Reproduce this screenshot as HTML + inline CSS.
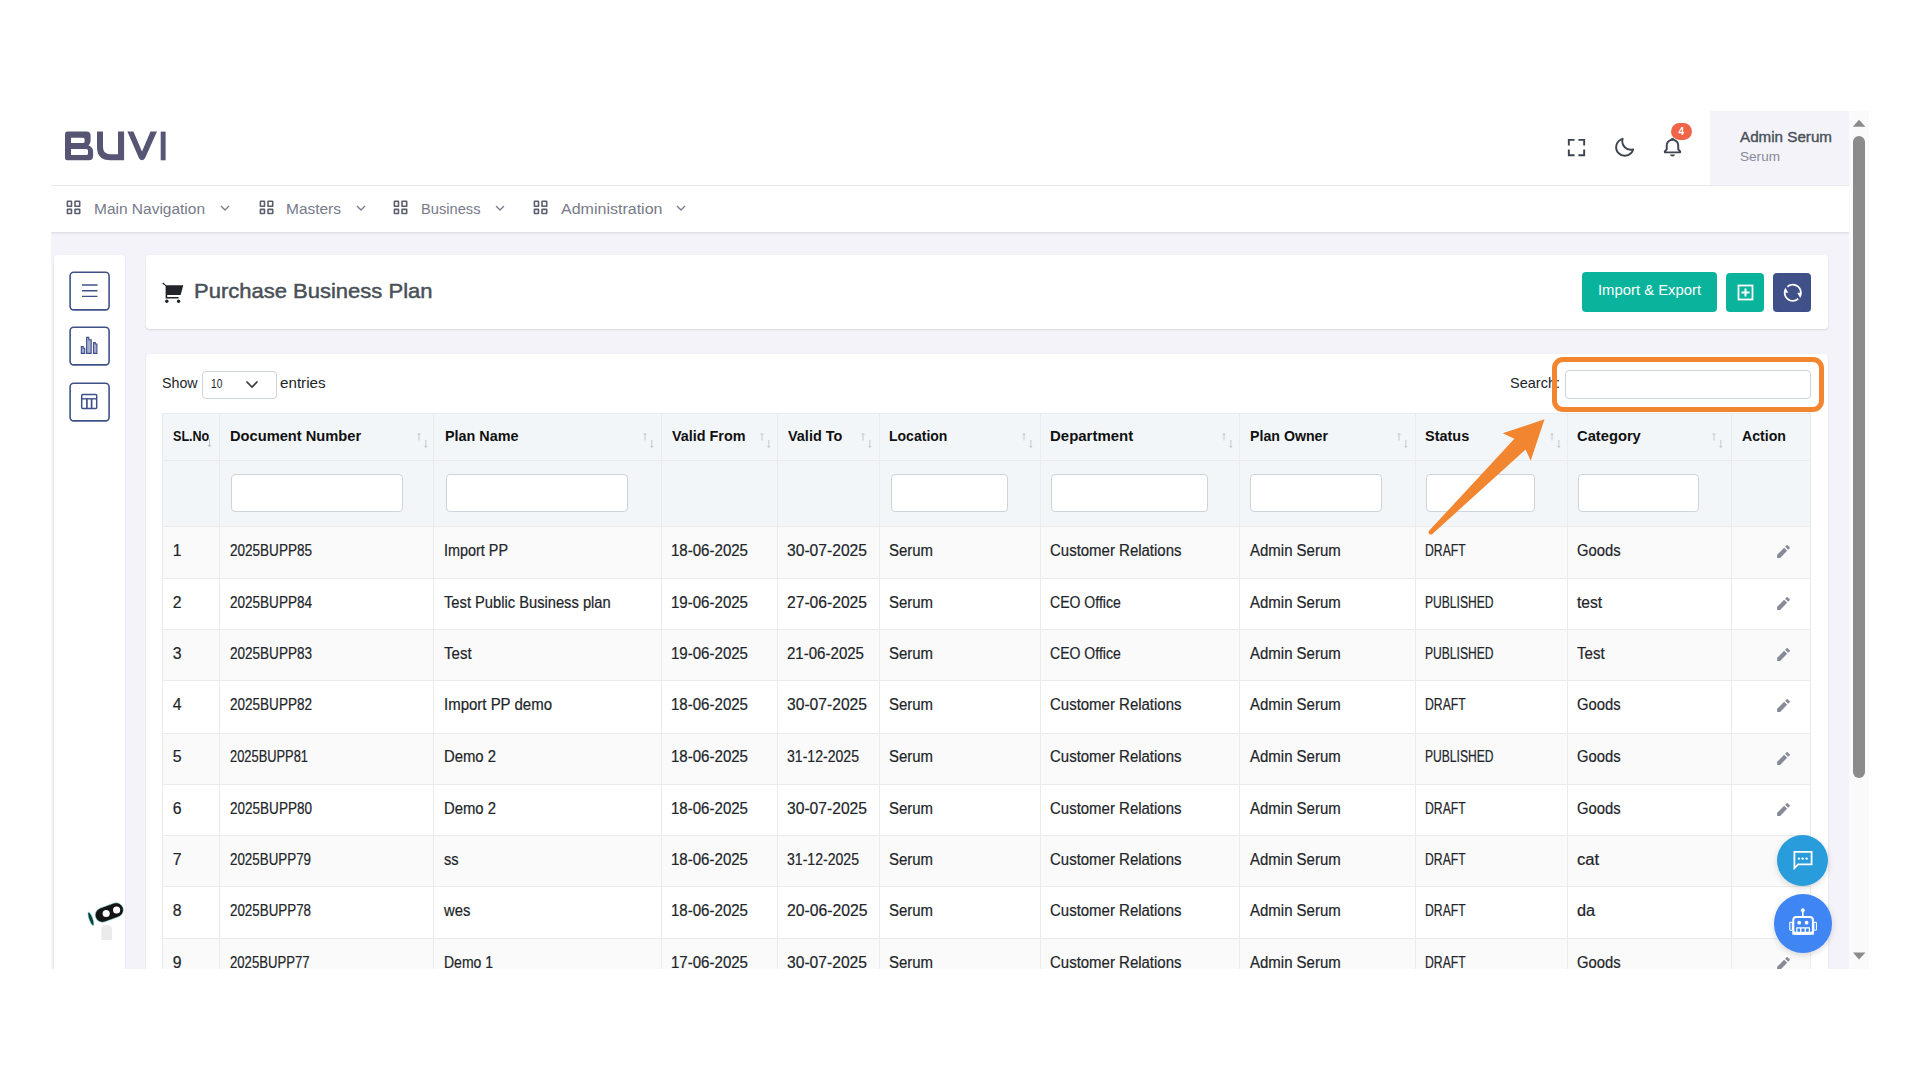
<!DOCTYPE html>
<html><head><meta charset="utf-8"><style>
html,body{margin:0;padding:0;}
body{width:1920px;height:1080px;overflow:hidden;position:relative;background:#fff;font-family:"Liberation Sans", sans-serif;}
.b{position:absolute;}
.t{position:absolute;white-space:nowrap;line-height:1;}
</style></head><body>
<div class="b" style="left:51px;top:111px;width:1798px;height:858px;background:#f3f3f9;"></div>
<div class="b" style="left:51px;top:111px;width:1798px;height:74px;background:#fff;border-bottom:1px solid #e9ebec;"></div>
<div class="b" style="left:1710px;top:111px;width:139px;height:74px;background:#f3f3f9;"></div>
<div class="b" style="left:51px;top:186px;width:1798px;height:46px;background:#fff;box-shadow:0 1px 2px rgba(56,65,74,0.15);"></div>
<svg class="b" style="left:0px;top:0px;" width="200" height="200" viewBox="0 0 200 200"><g fill="#565573" fill-rule="evenodd"><path d="M65 134 Q65 131.6 67.4 131.6 H86.5 Q90.6 131.6 90.6 135.7 V140.5 Q90.6 143.6 88.6 145.6 Q93.1 147.4 93.1 151.5 V156 Q93.1 160.3 88.8 160.3 H67.4 Q65 160.3 65 158 Z M71 137.8 H83 Q84.6 137.8 84.6 139.4 V141.5 Q84.6 143 83 143 H71 Z M71 149 H86.4 Q88 149 88 150.6 V153.4 Q88 155 86.4 155 H71 Z"/><path d="M97 131.6 H103 V147 Q103 154.3 110.3 154.3 H118 V131.6 H124.1 V160.3 H110.3 Q97 160.3 97 147 Z"/><path d="M127.4 131.6 H133.4 L142 151.5 L150.5 131.6 H157 L145 158.3 Q142 162 139 158.3 Z"/><rect x="160.7" y="131.6" width="4.9" height="28.7"/></g></svg>
<svg class="b" style="left:1565.1px;top:135.5px;" width="23" height="23" viewBox="0 0 24 24"><path fill="#3d4450" d="M5 5h5V3H3v7h2zm5 14H5v-5H3v7h7zm11-5h-2v5h-5v2h7zm-2-4h2V3h-7v2h5z"/></svg>
<svg class="b" style="left:1612.8px;top:135.6px;" width="23" height="23" viewBox="0 0 24 24"><path fill="#3d4450" d="M20.742 13.045a8.088 8.088 0 0 1-2.077.271c-2.135 0-4.14-.83-5.646-2.336a8.025 8.025 0 0 1-2.064-7.723A1 1 0 0 0 9.73 2.034a10.014 10.014 0 0 0-4.489 2.582c-3.898 3.898-3.898 10.243 0 14.143a9.937 9.937 0 0 0 7.072 2.93 9.93 9.93 0 0 0 7.07-2.929 10.007 10.007 0 0 0 2.583-4.491 1.001 1.001 0 0 0-1.224-1.224zm-2.772 4.301a7.947 7.947 0 0 1-5.656 2.343 7.953 7.953 0 0 1-5.658-2.344c-3.118-3.119-3.118-8.195 0-11.314a7.923 7.923 0 0 1 2.06-1.483 10.027 10.027 0 0 0 2.89 7.848 9.972 9.972 0 0 0 7.848 2.891 8.036 8.036 0 0 1-1.484 2.059z"/></svg>
<svg class="b" style="left:1660.5px;top:136.2px;" width="23" height="23" viewBox="0 0 24 24"><path fill="#3d4450" d="M19 13.586V10c0-3.217-2.185-5.927-5.145-6.742C13.562 2.52 12.846 2 12 2s-1.562.52-1.855 1.258C7.185 4.074 5 6.783 5 10v3.586l-1.707 1.707A.996.996 0 0 0 3 16v1a1 1 0 0 0 1 1h16a1 1 0 0 0 1-1v-1a.996.996 0 0 0-.293-.707L19 13.586zM19 16.3H5v.114l1.707-1.707A.996.996 0 0 0 7 14v-4c0-2.757 2.243-5 5-5s5 2.243 5 5v4c0 .266.105.52.293.707L19 16.414V17zm-7 5a2.98 2.98 0 0 0 2.818-2H9.182A2.98 2.98 0 0 0 12 21.3z"/></svg>
<div class="b" style="left:1671px;top:123px;width:21px;height:17px;background:#f06548;border-radius:9px;"></div>
<div class="t" style="left:1678.5px;top:126.84px;font-size:10px;font-weight:700;color:#fff;">4</div>
<div class="t" style="left:1740px;top:129.85px;font-size:14px;font-weight:400;color:#495057;transform:scaleX(1.0847);transform-origin:0 0;-webkit-text-stroke:0.35px #495057;">Admin Serum</div>
<div class="t" style="left:1740px;top:151.42px;font-size:12.5px;font-weight:400;color:#878a99;transform:scaleX(1.0861);transform-origin:0 0;">Serum</div>
<svg class="b" style="left:66px;top:199.5px;" width="15" height="15" viewBox="0 0 15 15"><rect x="1.4" y="1.3" width="4.1" height="5" rx="0.4" fill="none" stroke="#5b5e6e" stroke-width="1.6"/><rect x="9" y="1.3" width="4.7" height="5" rx="0.4" fill="none" stroke="#5b5e6e" stroke-width="1.6"/><rect x="1.4" y="9.4" width="4.1" height="4.1" rx="0.4" fill="none" stroke="#5b5e6e" stroke-width="1.6"/><rect x="9" y="9.4" width="4.7" height="4.1" rx="0.4" fill="none" stroke="#5b5e6e" stroke-width="1.6"/></svg>
<div class="t" style="left:94px;top:201.25px;font-size:15.3px;font-weight:400;color:#777a89;transform:scaleX(1.0120);transform-origin:0 0;">Main Navigation</div>
<svg class="b" style="left:219.5px;top:204.5px;" width="10" height="7" viewBox="0 0 10 7"><path d="M1 1 L5 5 L9 1" fill="none" stroke="#7b7f8f" stroke-width="1.4"/></svg>
<svg class="b" style="left:258.5px;top:199.5px;" width="15" height="15" viewBox="0 0 15 15"><rect x="1.4" y="1.3" width="4.1" height="5" rx="0.4" fill="none" stroke="#5b5e6e" stroke-width="1.6"/><rect x="9" y="1.3" width="4.7" height="5" rx="0.4" fill="none" stroke="#5b5e6e" stroke-width="1.6"/><rect x="1.4" y="9.4" width="4.1" height="4.1" rx="0.4" fill="none" stroke="#5b5e6e" stroke-width="1.6"/><rect x="9" y="9.4" width="4.7" height="4.1" rx="0.4" fill="none" stroke="#5b5e6e" stroke-width="1.6"/></svg>
<div class="t" style="left:286px;top:201.25px;font-size:15.3px;font-weight:400;color:#777a89;transform:scaleX(1.0109);transform-origin:0 0;">Masters</div>
<svg class="b" style="left:355.5px;top:204.5px;" width="10" height="7" viewBox="0 0 10 7"><path d="M1 1 L5 5 L9 1" fill="none" stroke="#7b7f8f" stroke-width="1.4"/></svg>
<svg class="b" style="left:393px;top:199.5px;" width="15" height="15" viewBox="0 0 15 15"><rect x="1.4" y="1.3" width="4.1" height="5" rx="0.4" fill="none" stroke="#5b5e6e" stroke-width="1.6"/><rect x="9" y="1.3" width="4.7" height="5" rx="0.4" fill="none" stroke="#5b5e6e" stroke-width="1.6"/><rect x="1.4" y="9.4" width="4.1" height="4.1" rx="0.4" fill="none" stroke="#5b5e6e" stroke-width="1.6"/><rect x="9" y="9.4" width="4.7" height="4.1" rx="0.4" fill="none" stroke="#5b5e6e" stroke-width="1.6"/></svg>
<div class="t" style="left:421px;top:201.25px;font-size:15.3px;font-weight:400;color:#777a89;transform:scaleX(0.9585);transform-origin:0 0;">Business</div>
<svg class="b" style="left:494.5px;top:204.5px;" width="10" height="7" viewBox="0 0 10 7"><path d="M1 1 L5 5 L9 1" fill="none" stroke="#7b7f8f" stroke-width="1.4"/></svg>
<svg class="b" style="left:532.5px;top:199.5px;" width="15" height="15" viewBox="0 0 15 15"><rect x="1.4" y="1.3" width="4.1" height="5" rx="0.4" fill="none" stroke="#5b5e6e" stroke-width="1.6"/><rect x="9" y="1.3" width="4.7" height="5" rx="0.4" fill="none" stroke="#5b5e6e" stroke-width="1.6"/><rect x="1.4" y="9.4" width="4.1" height="4.1" rx="0.4" fill="none" stroke="#5b5e6e" stroke-width="1.6"/><rect x="9" y="9.4" width="4.7" height="4.1" rx="0.4" fill="none" stroke="#5b5e6e" stroke-width="1.6"/></svg>
<div class="t" style="left:561px;top:201.25px;font-size:15.3px;font-weight:400;color:#777a89;transform:scaleX(1.0472);transform-origin:0 0;">Administration</div>
<svg class="b" style="left:675.5px;top:204.5px;" width="10" height="7" viewBox="0 0 10 7"><path d="M1 1 L5 5 L9 1" fill="none" stroke="#7b7f8f" stroke-width="1.4"/></svg>
<div class="b" style="left:54px;top:255px;width:71px;height:800px;background:#fff;border-radius:4px;box-shadow:0 1px 2px rgba(56,65,74,0.15);"></div>
<svg class="b" style="left:68px;top:270.5px;" width="43.5" height="42" viewBox="0 0 43.5 42"><rect x="2.1" y="1.3" width="39" height="37.6" rx="3.6" fill="none" stroke="#405189" stroke-width="1.6"/></svg>
<svg class="b" style="left:68px;top:326.0px;" width="43.5" height="42" viewBox="0 0 43.5 42"><rect x="2.1" y="1.3" width="39" height="37.6" rx="3.6" fill="none" stroke="#405189" stroke-width="1.6"/></svg>
<svg class="b" style="left:68px;top:381.5px;" width="43.5" height="42" viewBox="0 0 43.5 42"><rect x="2.1" y="1.3" width="39" height="37.6" rx="3.6" fill="none" stroke="#405189" stroke-width="1.6"/></svg>
<svg class="b" style="left:80px;top:282px;" width="20" height="16" viewBox="0 0 20 16"><path d="M2 3H17.5M2 8.7H17.5M2 14.4H17.5" stroke="#405189" stroke-width="1.4"/></svg>
<svg class="b" style="left:76px;top:330px;" width="26" height="84" viewBox="0 0 26 84"><g fill="#a3abd0" stroke="#405189" stroke-width="1.1"><path d="M5.3 23.4 V16.5 H7.2 V18.3 H8.7 V23.4 Z"/><path d="M10.6 23.4 V7.4 H12.8 V9.7 H15.2 V23.4 Z"/><path d="M17.5 23.4 V12.5 H19.3 V14 H20.9 V23.4 Z"/></g><rect x="5.7" y="64.5" width="15" height="14" rx="1" fill="none" stroke="#405189" stroke-width="1.5"/><path d="M5.7 68.8 H20.7" stroke="#405189" stroke-width="1.4"/><path d="M10.9 68.8 V78.5 M15.6 68.8 V78.5" stroke="#405189" stroke-width="1.7"/></svg>
<svg class="b" style="left:80px;top:895px;" width="50" height="50" viewBox="0 0 50 50"><g transform="rotate(-20 109 912.5)" transform-origin="0 0"></g><rect x="94.8" y="905.25" width="29" height="14.5" rx="7.25" transform="translate(-80 -895) rotate(-20 109.3 912.5)" fill="#151515" stroke="#7ad9d3" stroke-width="0.7" stroke-opacity="0.7"/><g transform="translate(-80 -895)"><circle cx="106.2" cy="913.5" r="3.6" fill="#fff"/><circle cx="116.6" cy="910" r="3.6" fill="#fff"/><ellipse cx="90.9" cy="918.8" rx="1.8" ry="7" transform="rotate(-20 90.9 918.8)" fill="#0d3b3b" stroke="#7ad9d3" stroke-width="0.8" stroke-opacity="0.7"/><path d="M101.3 940 V929 Q101.3 925 106.6 925 Q112 925 112 929 V940 Z" fill="#ebebeb"/></g></svg>
<div class="b" style="left:146px;top:255px;width:1682px;height:74px;background:#fff;border-radius:4px;box-shadow:0 1px 2px rgba(56,65,74,0.15);"></div>
<svg class="b" style="left:155px;top:270px;" width="40" height="40" viewBox="0 0 40 40"><g transform="translate(-155 -270)" fill="#212529"><path d="M162.2 283.4 L163.1 282.5 L166.3 285.2 L183.2 285.2 L181.9 290.5 L180.6 295 L167.2 295 L167.2 297 L178.6 297 L178.6 298.6 L165.6 298.6 L165.6 286 Z"/><circle cx="166.8" cy="301.2" r="1.7"/><circle cx="178.6" cy="301.2" r="1.7"/></g></svg>
<div class="t" style="left:193.8px;top:282.24px;font-size:19.8px;font-weight:400;color:#495057;transform:scaleX(1.1123);transform-origin:0 0;-webkit-text-stroke:0.45px #495057;">Purchase Business Plan</div>
<div class="b" style="left:1582px;top:272px;width:135px;height:39.5px;background:#0ab39c;border-radius:4px;"></div>
<div class="t" style="left:1598px;top:282.97px;font-size:14.8px;font-weight:400;color:#fff;transform:scaleX(1.0020);transform-origin:0 0;">Import &amp; Export</div>
<div class="b" style="left:1726px;top:273px;width:38px;height:38.5px;background:#0ab39c;border-radius:4px;"></div>
<svg class="b" style="left:1737px;top:284px;" width="17" height="17" viewBox="0 0 17 17"><rect x="1.5" y="1.5" width="14" height="14" fill="none" stroke="#fff" stroke-width="1.8"/><path d="M8.5 4.5V12.5M4.5 8.5H12.5" stroke="#fff" stroke-width="2"/></svg>
<div class="b" style="left:1773px;top:273px;width:38px;height:38.5px;background:#405189;border-radius:4px;"></div>
<svg class="b" style="left:1781.6px;top:282px;" width="21.6" height="21.6" viewBox="0 0 24 24"><path fill="#fff" d="M5.463 4.433A9.961 9.961 0 0 1 12 2c5.523 0 10 4.477 10 10 0 2.136-.67 4.116-1.81 5.74L17 12h3A8 8 0 0 0 6.46 6.228l-.997-1.795zm13.074 15.134A9.961 9.961 0 0 1 12 22C6.477 22 2 17.523 2 12c0-2.136.67-4.116 1.81-5.74L7 12H4a8 8 0 0 0 13.54 5.772l.997 1.795z"/></svg>
<div class="b" style="left:146px;top:354px;width:1682px;height:700px;background:#fff;border-radius:4px;box-shadow:0 1px 2px rgba(56,65,74,0.15);"></div>
<div class="t" style="left:162px;top:376.03px;font-size:14.5px;font-weight:400;color:#212529;transform:scaleX(0.9812);transform-origin:0 0;">Show</div>
<div class="b" style="left:201.5px;top:370.5px;width:75px;height:28.5px;border:1px solid #ced4da;border-radius:4px;box-sizing:border-box;background:#fff;"></div>
<div class="t" style="left:210.8px;top:377.20px;font-size:13px;font-weight:400;color:#212529;transform:scaleX(0.7810);transform-origin:0 0;">10</div>
<svg class="b" style="left:245px;top:380px;" width="14" height="9" viewBox="0 0 14 9"><path d="M1.5 1.5 L7 7 L12.5 1.5" fill="none" stroke="#343a40" stroke-width="1.6"/></svg>
<div class="t" style="left:280px;top:375.93px;font-size:14.5px;font-weight:400;color:#212529;transform:scaleX(1.0475);transform-origin:0 0;">entries</div>
<div class="t" style="left:1509.5px;top:376.13px;font-size:14.5px;font-weight:400;color:#212529;transform:scaleX(1.0003);transform-origin:0 0;">Search:</div>
<div class="b" style="left:1565px;top:370.3px;width:246.3px;height:28.5px;border:1px solid #ced4da;border-radius:4px;box-sizing:border-box;background:#fff;"></div>
<div class="b" style="left:162px;top:413px;width:1648px;height:113px;background:#f3f6f9;"></div>
<div class="b" style="left:162px;top:526px;width:1648px;height:52px;background:#fafafa;"></div>
<div class="b" style="left:162px;top:629px;width:1648px;height:51px;background:#fafafa;"></div>
<div class="b" style="left:162px;top:733px;width:1648px;height:51px;background:#fafafa;"></div>
<div class="b" style="left:162px;top:835px;width:1648px;height:51px;background:#fafafa;"></div>
<div class="b" style="left:162px;top:938px;width:1648px;height:52px;background:#fafafa;"></div>
<div class="b" style="left:162px;top:413px;width:1px;height:556px;background:#e9ebec;"></div>
<div class="b" style="left:219px;top:413px;width:1px;height:556px;background:#e9ebec;"></div>
<div class="b" style="left:433px;top:413px;width:1px;height:556px;background:#e9ebec;"></div>
<div class="b" style="left:661px;top:413px;width:1px;height:556px;background:#e9ebec;"></div>
<div class="b" style="left:777px;top:413px;width:1px;height:556px;background:#e9ebec;"></div>
<div class="b" style="left:879px;top:413px;width:1px;height:556px;background:#e9ebec;"></div>
<div class="b" style="left:1040px;top:413px;width:1px;height:556px;background:#e9ebec;"></div>
<div class="b" style="left:1239px;top:413px;width:1px;height:556px;background:#e9ebec;"></div>
<div class="b" style="left:1415px;top:413px;width:1px;height:556px;background:#e9ebec;"></div>
<div class="b" style="left:1567px;top:413px;width:1px;height:556px;background:#e9ebec;"></div>
<div class="b" style="left:1731px;top:413px;width:1px;height:556px;background:#e9ebec;"></div>
<div class="b" style="left:1810px;top:413px;width:1px;height:556px;background:#e9ebec;"></div>
<div class="b" style="left:162px;top:413px;width:1649px;height:1px;background:#e9ebec;"></div>
<div class="b" style="left:162px;top:460px;width:1649px;height:1px;background:#e9ebec;"></div>
<div class="b" style="left:162px;top:526px;width:1649px;height:1px;background:#e9ebec;"></div>
<div class="b" style="left:162px;top:578px;width:1649px;height:1px;background:#e9ebec;"></div>
<div class="b" style="left:162px;top:629px;width:1649px;height:1px;background:#e9ebec;"></div>
<div class="b" style="left:162px;top:680px;width:1649px;height:1px;background:#e9ebec;"></div>
<div class="b" style="left:162px;top:733px;width:1649px;height:1px;background:#e9ebec;"></div>
<div class="b" style="left:162px;top:784px;width:1649px;height:1px;background:#e9ebec;"></div>
<div class="b" style="left:162px;top:835px;width:1649px;height:1px;background:#e9ebec;"></div>
<div class="b" style="left:162px;top:886px;width:1649px;height:1px;background:#e9ebec;"></div>
<div class="b" style="left:162px;top:938px;width:1649px;height:1px;background:#e9ebec;"></div>
<div class="t" style="left:172.5px;top:429.35px;font-size:14px;font-weight:700;color:#111;transform:scaleX(0.8973);transform-origin:0 0;">SL.No</div>
<div class="t" style="left:230px;top:429.35px;font-size:14px;font-weight:700;color:#111;transform:scaleX(1.0476);transform-origin:0 0;">Document Number</div>
<div class="t" style="left:445px;top:429.35px;font-size:14px;font-weight:700;color:#111;transform:scaleX(1.0266);transform-origin:0 0;">Plan Name</div>
<div class="t" style="left:672px;top:429.35px;font-size:14px;font-weight:700;color:#111;transform:scaleX(1.0269);transform-origin:0 0;">Valid From</div>
<div class="t" style="left:788px;top:429.35px;font-size:14px;font-weight:700;color:#111;transform:scaleX(1.0315);transform-origin:0 0;">Valid To</div>
<div class="t" style="left:889.3px;top:429.35px;font-size:14px;font-weight:700;color:#111;transform:scaleX(1.0010);transform-origin:0 0;">Location</div>
<div class="t" style="left:1050.3px;top:429.35px;font-size:14px;font-weight:700;color:#111;transform:scaleX(1.0695);transform-origin:0 0;">Department</div>
<div class="t" style="left:1249.5px;top:429.35px;font-size:14px;font-weight:700;color:#111;transform:scaleX(1.0126);transform-origin:0 0;">Plan Owner</div>
<div class="t" style="left:1424.8px;top:429.35px;font-size:14px;font-weight:700;color:#111;transform:scaleX(1.0328);transform-origin:0 0;">Status</div>
<div class="t" style="left:1576.8px;top:429.35px;font-size:14px;font-weight:700;color:#111;transform:scaleX(1.0513);transform-origin:0 0;">Category</div>
<div class="t" style="left:1741.8px;top:429.35px;font-size:14px;font-weight:700;color:#111;transform:scaleX(1.0100);transform-origin:0 0;">Action</div>
<svg class="b" style="left:416px;top:431px;" width="14" height="18" viewBox="0 0 14 18"><path d="M3 9.5V2.5M1.6 3.9 L3 2.3 L4.4 3.9" fill="none" stroke="#c3c8ce" stroke-width="1"/><path d="M9.8 9V16.3M8.4 14.9 L9.8 16.5 L11.2 14.9" fill="none" stroke="#c3c8ce" stroke-width="1"/></svg>
<svg class="b" style="left:641.5px;top:431px;" width="14" height="18" viewBox="0 0 14 18"><path d="M3 9.5V2.5M1.6 3.9 L3 2.3 L4.4 3.9" fill="none" stroke="#c3c8ce" stroke-width="1"/><path d="M9.8 9V16.3M8.4 14.9 L9.8 16.5 L11.2 14.9" fill="none" stroke="#c3c8ce" stroke-width="1"/></svg>
<svg class="b" style="left:758.5px;top:431px;" width="14" height="18" viewBox="0 0 14 18"><path d="M3 9.5V2.5M1.6 3.9 L3 2.3 L4.4 3.9" fill="none" stroke="#c3c8ce" stroke-width="1"/><path d="M9.8 9V16.3M8.4 14.9 L9.8 16.5 L11.2 14.9" fill="none" stroke="#c3c8ce" stroke-width="1"/></svg>
<svg class="b" style="left:860px;top:431px;" width="14" height="18" viewBox="0 0 14 18"><path d="M3 9.5V2.5M1.6 3.9 L3 2.3 L4.4 3.9" fill="none" stroke="#c3c8ce" stroke-width="1"/><path d="M9.8 9V16.3M8.4 14.9 L9.8 16.5 L11.2 14.9" fill="none" stroke="#c3c8ce" stroke-width="1"/></svg>
<svg class="b" style="left:1021px;top:431px;" width="14" height="18" viewBox="0 0 14 18"><path d="M3 9.5V2.5M1.6 3.9 L3 2.3 L4.4 3.9" fill="none" stroke="#c3c8ce" stroke-width="1"/><path d="M9.8 9V16.3M8.4 14.9 L9.8 16.5 L11.2 14.9" fill="none" stroke="#c3c8ce" stroke-width="1"/></svg>
<svg class="b" style="left:1221px;top:431px;" width="14" height="18" viewBox="0 0 14 18"><path d="M3 9.5V2.5M1.6 3.9 L3 2.3 L4.4 3.9" fill="none" stroke="#c3c8ce" stroke-width="1"/><path d="M9.8 9V16.3M8.4 14.9 L9.8 16.5 L11.2 14.9" fill="none" stroke="#c3c8ce" stroke-width="1"/></svg>
<svg class="b" style="left:1395.5px;top:431px;" width="14" height="18" viewBox="0 0 14 18"><path d="M3 9.5V2.5M1.6 3.9 L3 2.3 L4.4 3.9" fill="none" stroke="#c3c8ce" stroke-width="1"/><path d="M9.8 9V16.3M8.4 14.9 L9.8 16.5 L11.2 14.9" fill="none" stroke="#c3c8ce" stroke-width="1"/></svg>
<svg class="b" style="left:1548.5px;top:431px;" width="14" height="18" viewBox="0 0 14 18"><path d="M3 9.5V2.5M1.6 3.9 L3 2.3 L4.4 3.9" fill="none" stroke="#c3c8ce" stroke-width="1"/><path d="M9.8 9V16.3M8.4 14.9 L9.8 16.5 L11.2 14.9" fill="none" stroke="#c3c8ce" stroke-width="1"/></svg>
<svg class="b" style="left:1711px;top:431px;" width="14" height="18" viewBox="0 0 14 18"><path d="M3 9.5V2.5M1.6 3.9 L3 2.3 L4.4 3.9" fill="none" stroke="#c3c8ce" stroke-width="1"/><path d="M9.8 9V16.3M8.4 14.9 L9.8 16.5 L11.2 14.9" fill="none" stroke="#c3c8ce" stroke-width="1"/></svg>
<svg class="b" style="left:207px;top:438px;" width="6" height="11" viewBox="0 0 6 11"><path d="M2.5 1V8.5M1 7 L2.5 8.8 L4 7" fill="none" stroke="#bfc5cc" stroke-width="1"/></svg>
<div class="b" style="left:230.5px;top:474.3px;width:172px;height:38px;border:1px solid #ced4da;border-radius:4px;box-sizing:border-box;background:#fff;"></div>
<div class="b" style="left:446px;top:474.3px;width:181.5px;height:38px;border:1px solid #ced4da;border-radius:4px;box-sizing:border-box;background:#fff;"></div>
<div class="b" style="left:890.5px;top:474.3px;width:117px;height:38px;border:1px solid #ced4da;border-radius:4px;box-sizing:border-box;background:#fff;"></div>
<div class="b" style="left:1050.5px;top:474.3px;width:157.5px;height:38px;border:1px solid #ced4da;border-radius:4px;box-sizing:border-box;background:#fff;"></div>
<div class="b" style="left:1250px;top:474.3px;width:132px;height:38px;border:1px solid #ced4da;border-radius:4px;box-sizing:border-box;background:#fff;"></div>
<div class="b" style="left:1425.5px;top:474.3px;width:109px;height:38px;border:1px solid #ced4da;border-radius:4px;box-sizing:border-box;background:#fff;"></div>
<div class="b" style="left:1578px;top:474.3px;width:121px;height:38px;border:1px solid #ced4da;border-radius:4px;box-sizing:border-box;background:#fff;"></div>
<div class="t" style="left:172.8px;top:542.73px;font-size:15.8px;font-weight:400;color:#212529;-webkit-text-stroke:0.2px #212529;">1</div>
<div class="t" style="left:230.2px;top:542.73px;font-size:15.8px;font-weight:400;color:#212529;transform:scaleX(0.8565);transform-origin:0 0;-webkit-text-stroke:0.2px #212529;">2025BUPP85</div>
<div class="t" style="left:444.3px;top:542.73px;font-size:15.8px;font-weight:400;color:#212529;transform:scaleX(0.9112);transform-origin:0 0;-webkit-text-stroke:0.2px #212529;">Import PP</div>
<div class="t" style="left:671.1px;top:542.73px;font-size:15.8px;font-weight:400;color:#212529;transform:scaleX(0.9528);transform-origin:0 0;-webkit-text-stroke:0.2px #212529;">18-06-2025</div>
<div class="t" style="left:787.3px;top:542.73px;font-size:15.8px;font-weight:400;color:#212529;transform:scaleX(0.9899);transform-origin:0 0;-webkit-text-stroke:0.2px #212529;">30-07-2025</div>
<div class="t" style="left:889.1px;top:542.73px;font-size:15.8px;font-weight:400;color:#212529;transform:scaleX(0.9456);transform-origin:0 0;-webkit-text-stroke:0.2px #212529;">Serum</div>
<div class="t" style="left:1050.1px;top:542.73px;font-size:15.8px;font-weight:400;color:#212529;transform:scaleX(0.9480);transform-origin:0 0;-webkit-text-stroke:0.2px #212529;">Customer Relations</div>
<div class="t" style="left:1250.2px;top:542.73px;font-size:15.8px;font-weight:400;color:#212529;transform:scaleX(0.9482);transform-origin:0 0;-webkit-text-stroke:0.2px #212529;">Admin Serum</div>
<div class="t" style="left:1424.9px;top:542.73px;font-size:15.8px;font-weight:400;color:#212529;transform:scaleX(0.7729);transform-origin:0 0;-webkit-text-stroke:0.2px #212529;">DRAFT</div>
<div class="t" style="left:1576.9px;top:542.73px;font-size:15.8px;font-weight:400;color:#212529;transform:scaleX(0.9367);transform-origin:0 0;-webkit-text-stroke:0.2px #212529;">Goods</div>
<svg class="b" style="left:1775px;top:542.8px;" width="17" height="17" viewBox="0 0 24 24"><path fill="#878a99" d="M12.9 6.858l4.242 4.243L7.242 21H3v-4.243l9.9-9.9zm1.414-1.414l2.121-2.122a1 1 0 0 1 1.414 0l2.829 2.829a1 1 0 0 1 0 1.414l-2.122 2.121-4.242-4.242z"/></svg>
<div class="t" style="left:172.8px;top:594.93px;font-size:15.8px;font-weight:400;color:#212529;-webkit-text-stroke:0.2px #212529;">2</div>
<div class="t" style="left:230.2px;top:594.93px;font-size:15.8px;font-weight:400;color:#212529;transform:scaleX(0.8565);transform-origin:0 0;-webkit-text-stroke:0.2px #212529;">2025BUPP84</div>
<div class="t" style="left:444.3px;top:594.93px;font-size:15.8px;font-weight:400;color:#212529;transform:scaleX(0.9306);transform-origin:0 0;-webkit-text-stroke:0.2px #212529;">Test Public Business plan</div>
<div class="t" style="left:671.1px;top:594.93px;font-size:15.8px;font-weight:400;color:#212529;transform:scaleX(0.9528);transform-origin:0 0;-webkit-text-stroke:0.2px #212529;">19-06-2025</div>
<div class="t" style="left:787.3px;top:594.93px;font-size:15.8px;font-weight:400;color:#212529;transform:scaleX(0.9899);transform-origin:0 0;-webkit-text-stroke:0.2px #212529;">27-06-2025</div>
<div class="t" style="left:889.1px;top:594.93px;font-size:15.8px;font-weight:400;color:#212529;transform:scaleX(0.9456);transform-origin:0 0;-webkit-text-stroke:0.2px #212529;">Serum</div>
<div class="t" style="left:1050.1px;top:594.93px;font-size:15.8px;font-weight:400;color:#212529;transform:scaleX(0.8889);transform-origin:0 0;-webkit-text-stroke:0.2px #212529;">CEO Office</div>
<div class="t" style="left:1250.2px;top:594.93px;font-size:15.8px;font-weight:400;color:#212529;transform:scaleX(0.9482);transform-origin:0 0;-webkit-text-stroke:0.2px #212529;">Admin Serum</div>
<div class="t" style="left:1424.9px;top:594.93px;font-size:15.8px;font-weight:400;color:#212529;transform:scaleX(0.7650);transform-origin:0 0;-webkit-text-stroke:0.2px #212529;">PUBLISHED</div>
<div class="t" style="left:1576.9px;top:594.93px;font-size:15.8px;font-weight:400;color:#212529;transform:scaleX(0.9894);transform-origin:0 0;-webkit-text-stroke:0.2px #212529;">test</div>
<svg class="b" style="left:1775px;top:594.8px;" width="17" height="17" viewBox="0 0 24 24"><path fill="#878a99" d="M12.9 6.858l4.242 4.243L7.242 21H3v-4.243l9.9-9.9zm1.414-1.414l2.121-2.122a1 1 0 0 1 1.414 0l2.829 2.829a1 1 0 0 1 0 1.414l-2.122 2.121-4.242-4.242z"/></svg>
<div class="t" style="left:172.8px;top:645.63px;font-size:15.8px;font-weight:400;color:#212529;-webkit-text-stroke:0.2px #212529;">3</div>
<div class="t" style="left:230.2px;top:645.63px;font-size:15.8px;font-weight:400;color:#212529;transform:scaleX(0.8565);transform-origin:0 0;-webkit-text-stroke:0.2px #212529;">2025BUPP83</div>
<div class="t" style="left:444.3px;top:645.63px;font-size:15.8px;font-weight:400;color:#212529;transform:scaleX(0.9522);transform-origin:0 0;-webkit-text-stroke:0.2px #212529;">Test</div>
<div class="t" style="left:671.1px;top:645.63px;font-size:15.8px;font-weight:400;color:#212529;transform:scaleX(0.9528);transform-origin:0 0;-webkit-text-stroke:0.2px #212529;">19-06-2025</div>
<div class="t" style="left:787.3px;top:645.63px;font-size:15.8px;font-weight:400;color:#212529;transform:scaleX(0.9528);transform-origin:0 0;-webkit-text-stroke:0.2px #212529;">21-06-2025</div>
<div class="t" style="left:889.1px;top:645.63px;font-size:15.8px;font-weight:400;color:#212529;transform:scaleX(0.9456);transform-origin:0 0;-webkit-text-stroke:0.2px #212529;">Serum</div>
<div class="t" style="left:1050.1px;top:645.63px;font-size:15.8px;font-weight:400;color:#212529;transform:scaleX(0.8889);transform-origin:0 0;-webkit-text-stroke:0.2px #212529;">CEO Office</div>
<div class="t" style="left:1250.2px;top:645.63px;font-size:15.8px;font-weight:400;color:#212529;transform:scaleX(0.9482);transform-origin:0 0;-webkit-text-stroke:0.2px #212529;">Admin Serum</div>
<div class="t" style="left:1424.9px;top:645.63px;font-size:15.8px;font-weight:400;color:#212529;transform:scaleX(0.7650);transform-origin:0 0;-webkit-text-stroke:0.2px #212529;">PUBLISHED</div>
<div class="t" style="left:1576.9px;top:645.63px;font-size:15.8px;font-weight:400;color:#212529;transform:scaleX(0.9522);transform-origin:0 0;-webkit-text-stroke:0.2px #212529;">Test</div>
<svg class="b" style="left:1775px;top:645.8px;" width="17" height="17" viewBox="0 0 24 24"><path fill="#878a99" d="M12.9 6.858l4.242 4.243L7.242 21H3v-4.243l9.9-9.9zm1.414-1.414l2.121-2.122a1 1 0 0 1 1.414 0l2.829 2.829a1 1 0 0 1 0 1.414l-2.122 2.121-4.242-4.242z"/></svg>
<div class="t" style="left:172.8px;top:697.23px;font-size:15.8px;font-weight:400;color:#212529;-webkit-text-stroke:0.2px #212529;">4</div>
<div class="t" style="left:230.2px;top:697.23px;font-size:15.8px;font-weight:400;color:#212529;transform:scaleX(0.8565);transform-origin:0 0;-webkit-text-stroke:0.2px #212529;">2025BUPP82</div>
<div class="t" style="left:444.3px;top:697.23px;font-size:15.8px;font-weight:400;color:#212529;transform:scaleX(0.9485);transform-origin:0 0;-webkit-text-stroke:0.2px #212529;">Import PP demo</div>
<div class="t" style="left:671.1px;top:697.23px;font-size:15.8px;font-weight:400;color:#212529;transform:scaleX(0.9528);transform-origin:0 0;-webkit-text-stroke:0.2px #212529;">18-06-2025</div>
<div class="t" style="left:787.3px;top:697.23px;font-size:15.8px;font-weight:400;color:#212529;transform:scaleX(0.9899);transform-origin:0 0;-webkit-text-stroke:0.2px #212529;">30-07-2025</div>
<div class="t" style="left:889.1px;top:697.23px;font-size:15.8px;font-weight:400;color:#212529;transform:scaleX(0.9456);transform-origin:0 0;-webkit-text-stroke:0.2px #212529;">Serum</div>
<div class="t" style="left:1050.1px;top:697.23px;font-size:15.8px;font-weight:400;color:#212529;transform:scaleX(0.9480);transform-origin:0 0;-webkit-text-stroke:0.2px #212529;">Customer Relations</div>
<div class="t" style="left:1250.2px;top:697.23px;font-size:15.8px;font-weight:400;color:#212529;transform:scaleX(0.9482);transform-origin:0 0;-webkit-text-stroke:0.2px #212529;">Admin Serum</div>
<div class="t" style="left:1424.9px;top:697.23px;font-size:15.8px;font-weight:400;color:#212529;transform:scaleX(0.7729);transform-origin:0 0;-webkit-text-stroke:0.2px #212529;">DRAFT</div>
<div class="t" style="left:1576.9px;top:697.23px;font-size:15.8px;font-weight:400;color:#212529;transform:scaleX(0.9367);transform-origin:0 0;-webkit-text-stroke:0.2px #212529;">Goods</div>
<svg class="b" style="left:1775px;top:696.8px;" width="17" height="17" viewBox="0 0 24 24"><path fill="#878a99" d="M12.9 6.858l4.242 4.243L7.242 21H3v-4.243l9.9-9.9zm1.414-1.414l2.121-2.122a1 1 0 0 1 1.414 0l2.829 2.829a1 1 0 0 1 0 1.414l-2.122 2.121-4.242-4.242z"/></svg>
<div class="t" style="left:172.8px;top:748.63px;font-size:15.8px;font-weight:400;color:#212529;-webkit-text-stroke:0.2px #212529;">5</div>
<div class="t" style="left:230.2px;top:748.63px;font-size:15.8px;font-weight:400;color:#212529;transform:scaleX(0.8148);transform-origin:0 0;-webkit-text-stroke:0.2px #212529;">2025BUPP81</div>
<div class="t" style="left:444.3px;top:748.63px;font-size:15.8px;font-weight:400;color:#212529;transform:scaleX(0.9401);transform-origin:0 0;-webkit-text-stroke:0.2px #212529;">Demo 2</div>
<div class="t" style="left:671.1px;top:748.63px;font-size:15.8px;font-weight:400;color:#212529;transform:scaleX(0.9528);transform-origin:0 0;-webkit-text-stroke:0.2px #212529;">18-06-2025</div>
<div class="t" style="left:787.3px;top:748.63px;font-size:15.8px;font-weight:400;color:#212529;transform:scaleX(0.8910);transform-origin:0 0;-webkit-text-stroke:0.2px #212529;">31-12-2025</div>
<div class="t" style="left:889.1px;top:748.63px;font-size:15.8px;font-weight:400;color:#212529;transform:scaleX(0.9456);transform-origin:0 0;-webkit-text-stroke:0.2px #212529;">Serum</div>
<div class="t" style="left:1050.1px;top:748.63px;font-size:15.8px;font-weight:400;color:#212529;transform:scaleX(0.9480);transform-origin:0 0;-webkit-text-stroke:0.2px #212529;">Customer Relations</div>
<div class="t" style="left:1250.2px;top:748.63px;font-size:15.8px;font-weight:400;color:#212529;transform:scaleX(0.9482);transform-origin:0 0;-webkit-text-stroke:0.2px #212529;">Admin Serum</div>
<div class="t" style="left:1424.9px;top:748.63px;font-size:15.8px;font-weight:400;color:#212529;transform:scaleX(0.7650);transform-origin:0 0;-webkit-text-stroke:0.2px #212529;">PUBLISHED</div>
<div class="t" style="left:1576.9px;top:748.63px;font-size:15.8px;font-weight:400;color:#212529;transform:scaleX(0.9367);transform-origin:0 0;-webkit-text-stroke:0.2px #212529;">Goods</div>
<svg class="b" style="left:1775px;top:749.8px;" width="17" height="17" viewBox="0 0 24 24"><path fill="#878a99" d="M12.9 6.858l4.242 4.243L7.242 21H3v-4.243l9.9-9.9zm1.414-1.414l2.121-2.122a1 1 0 0 1 1.414 0l2.829 2.829a1 1 0 0 1 0 1.414l-2.122 2.121-4.242-4.242z"/></svg>
<div class="t" style="left:172.8px;top:800.53px;font-size:15.8px;font-weight:400;color:#212529;-webkit-text-stroke:0.2px #212529;">6</div>
<div class="t" style="left:230.2px;top:800.53px;font-size:15.8px;font-weight:400;color:#212529;transform:scaleX(0.8565);transform-origin:0 0;-webkit-text-stroke:0.2px #212529;">2025BUPP80</div>
<div class="t" style="left:444.3px;top:800.53px;font-size:15.8px;font-weight:400;color:#212529;transform:scaleX(0.9401);transform-origin:0 0;-webkit-text-stroke:0.2px #212529;">Demo 2</div>
<div class="t" style="left:671.1px;top:800.53px;font-size:15.8px;font-weight:400;color:#212529;transform:scaleX(0.9528);transform-origin:0 0;-webkit-text-stroke:0.2px #212529;">18-06-2025</div>
<div class="t" style="left:787.3px;top:800.53px;font-size:15.8px;font-weight:400;color:#212529;transform:scaleX(0.9899);transform-origin:0 0;-webkit-text-stroke:0.2px #212529;">30-07-2025</div>
<div class="t" style="left:889.1px;top:800.53px;font-size:15.8px;font-weight:400;color:#212529;transform:scaleX(0.9456);transform-origin:0 0;-webkit-text-stroke:0.2px #212529;">Serum</div>
<div class="t" style="left:1050.1px;top:800.53px;font-size:15.8px;font-weight:400;color:#212529;transform:scaleX(0.9480);transform-origin:0 0;-webkit-text-stroke:0.2px #212529;">Customer Relations</div>
<div class="t" style="left:1250.2px;top:800.53px;font-size:15.8px;font-weight:400;color:#212529;transform:scaleX(0.9482);transform-origin:0 0;-webkit-text-stroke:0.2px #212529;">Admin Serum</div>
<div class="t" style="left:1424.9px;top:800.53px;font-size:15.8px;font-weight:400;color:#212529;transform:scaleX(0.7729);transform-origin:0 0;-webkit-text-stroke:0.2px #212529;">DRAFT</div>
<div class="t" style="left:1576.9px;top:800.53px;font-size:15.8px;font-weight:400;color:#212529;transform:scaleX(0.9367);transform-origin:0 0;-webkit-text-stroke:0.2px #212529;">Goods</div>
<svg class="b" style="left:1775px;top:800.8px;" width="17" height="17" viewBox="0 0 24 24"><path fill="#878a99" d="M12.9 6.858l4.242 4.243L7.242 21H3v-4.243l9.9-9.9zm1.414-1.414l2.121-2.122a1 1 0 0 1 1.414 0l2.829 2.829a1 1 0 0 1 0 1.414l-2.122 2.121-4.242-4.242z"/></svg>
<div class="t" style="left:172.8px;top:851.63px;font-size:15.8px;font-weight:400;color:#212529;-webkit-text-stroke:0.2px #212529;">7</div>
<div class="t" style="left:230.2px;top:851.63px;font-size:15.8px;font-weight:400;color:#212529;transform:scaleX(0.8461);transform-origin:0 0;-webkit-text-stroke:0.2px #212529;">2025BUPP79</div>
<div class="t" style="left:444.3px;top:851.63px;font-size:15.8px;font-weight:400;color:#212529;transform:scaleX(0.9242);transform-origin:0 0;-webkit-text-stroke:0.2px #212529;">ss</div>
<div class="t" style="left:671.1px;top:851.63px;font-size:15.8px;font-weight:400;color:#212529;transform:scaleX(0.9528);transform-origin:0 0;-webkit-text-stroke:0.2px #212529;">18-06-2025</div>
<div class="t" style="left:787.3px;top:851.63px;font-size:15.8px;font-weight:400;color:#212529;transform:scaleX(0.8910);transform-origin:0 0;-webkit-text-stroke:0.2px #212529;">31-12-2025</div>
<div class="t" style="left:889.1px;top:851.63px;font-size:15.8px;font-weight:400;color:#212529;transform:scaleX(0.9456);transform-origin:0 0;-webkit-text-stroke:0.2px #212529;">Serum</div>
<div class="t" style="left:1050.1px;top:851.63px;font-size:15.8px;font-weight:400;color:#212529;transform:scaleX(0.9480);transform-origin:0 0;-webkit-text-stroke:0.2px #212529;">Customer Relations</div>
<div class="t" style="left:1250.2px;top:851.63px;font-size:15.8px;font-weight:400;color:#212529;transform:scaleX(0.9482);transform-origin:0 0;-webkit-text-stroke:0.2px #212529;">Admin Serum</div>
<div class="t" style="left:1424.9px;top:851.63px;font-size:15.8px;font-weight:400;color:#212529;transform:scaleX(0.7729);transform-origin:0 0;-webkit-text-stroke:0.2px #212529;">DRAFT</div>
<div class="t" style="left:1576.9px;top:851.63px;font-size:15.8px;font-weight:400;color:#212529;transform:scaleX(1.0532);transform-origin:0 0;-webkit-text-stroke:0.2px #212529;">cat</div>
<div class="t" style="left:172.8px;top:902.73px;font-size:15.8px;font-weight:400;color:#212529;-webkit-text-stroke:0.2px #212529;">8</div>
<div class="t" style="left:230.2px;top:902.73px;font-size:15.8px;font-weight:400;color:#212529;transform:scaleX(0.8461);transform-origin:0 0;-webkit-text-stroke:0.2px #212529;">2025BUPP78</div>
<div class="t" style="left:444.3px;top:902.73px;font-size:15.8px;font-weight:400;color:#212529;transform:scaleX(0.9362);transform-origin:0 0;-webkit-text-stroke:0.2px #212529;">wes</div>
<div class="t" style="left:671.1px;top:902.73px;font-size:15.8px;font-weight:400;color:#212529;transform:scaleX(0.9528);transform-origin:0 0;-webkit-text-stroke:0.2px #212529;">18-06-2025</div>
<div class="t" style="left:787.3px;top:902.73px;font-size:15.8px;font-weight:400;color:#212529;transform:scaleX(0.9961);transform-origin:0 0;-webkit-text-stroke:0.2px #212529;">20-06-2025</div>
<div class="t" style="left:889.1px;top:902.73px;font-size:15.8px;font-weight:400;color:#212529;transform:scaleX(0.9456);transform-origin:0 0;-webkit-text-stroke:0.2px #212529;">Serum</div>
<div class="t" style="left:1050.1px;top:902.73px;font-size:15.8px;font-weight:400;color:#212529;transform:scaleX(0.9480);transform-origin:0 0;-webkit-text-stroke:0.2px #212529;">Customer Relations</div>
<div class="t" style="left:1250.2px;top:902.73px;font-size:15.8px;font-weight:400;color:#212529;transform:scaleX(0.9482);transform-origin:0 0;-webkit-text-stroke:0.2px #212529;">Admin Serum</div>
<div class="t" style="left:1424.9px;top:902.73px;font-size:15.8px;font-weight:400;color:#212529;transform:scaleX(0.7729);transform-origin:0 0;-webkit-text-stroke:0.2px #212529;">DRAFT</div>
<div class="t" style="left:1576.9px;top:902.73px;font-size:15.8px;font-weight:400;color:#212529;transform:scaleX(1.0354);transform-origin:0 0;-webkit-text-stroke:0.2px #212529;">da</div>
<div class="t" style="left:172.8px;top:954.63px;font-size:15.8px;font-weight:400;color:#212529;-webkit-text-stroke:0.2px #212529;">9</div>
<div class="t" style="left:230.2px;top:954.63px;font-size:15.8px;font-weight:400;color:#212529;transform:scaleX(0.8315);transform-origin:0 0;-webkit-text-stroke:0.2px #212529;">2025BUPP77</div>
<div class="t" style="left:444.3px;top:954.63px;font-size:15.8px;font-weight:400;color:#212529;transform:scaleX(0.8859);transform-origin:0 0;-webkit-text-stroke:0.2px #212529;">Demo 1</div>
<div class="t" style="left:671.1px;top:954.63px;font-size:15.8px;font-weight:400;color:#212529;transform:scaleX(0.9528);transform-origin:0 0;-webkit-text-stroke:0.2px #212529;">17-06-2025</div>
<div class="t" style="left:787.3px;top:954.63px;font-size:15.8px;font-weight:400;color:#212529;transform:scaleX(0.9899);transform-origin:0 0;-webkit-text-stroke:0.2px #212529;">30-07-2025</div>
<div class="t" style="left:889.1px;top:954.63px;font-size:15.8px;font-weight:400;color:#212529;transform:scaleX(0.9456);transform-origin:0 0;-webkit-text-stroke:0.2px #212529;">Serum</div>
<div class="t" style="left:1050.1px;top:954.63px;font-size:15.8px;font-weight:400;color:#212529;transform:scaleX(0.9480);transform-origin:0 0;-webkit-text-stroke:0.2px #212529;">Customer Relations</div>
<div class="t" style="left:1250.2px;top:954.63px;font-size:15.8px;font-weight:400;color:#212529;transform:scaleX(0.9482);transform-origin:0 0;-webkit-text-stroke:0.2px #212529;">Admin Serum</div>
<div class="t" style="left:1424.9px;top:954.63px;font-size:15.8px;font-weight:400;color:#212529;transform:scaleX(0.7729);transform-origin:0 0;-webkit-text-stroke:0.2px #212529;">DRAFT</div>
<div class="t" style="left:1576.9px;top:954.63px;font-size:15.8px;font-weight:400;color:#212529;transform:scaleX(0.9367);transform-origin:0 0;-webkit-text-stroke:0.2px #212529;">Goods</div>
<svg class="b" style="left:1775px;top:954.8px;" width="17" height="17" viewBox="0 0 24 24"><path fill="#878a99" d="M12.9 6.858l4.242 4.243L7.242 21H3v-4.243l9.9-9.9zm1.414-1.414l2.121-2.122a1 1 0 0 1 1.414 0l2.829 2.829a1 1 0 0 1 0 1.414l-2.122 2.121-4.242-4.242z"/></svg>
<div class="b" style="left:0px;top:969px;width:1920px;height:111px;background:#fff;"></div>
<div class="b" style="left:0px;top:0px;width:1920px;height:111px;background:#fff;"></div>
<div class="b" style="left:0px;top:0px;width:51px;height:1080px;background:#fff;"></div>
<div class="b" style="left:1849px;top:111px;width:20px;height:858px;background:#fafafa;"></div>
<svg class="b" style="left:1849px;top:113px;" width="20" height="20" viewBox="0 0 20 20"><path d="M3.8 13.7 L10 6.7 L16.5 13.7 Z" fill="#8b8b8b"/></svg>
<div class="b" style="left:1853px;top:136px;width:12.3px;height:642px;background:#8b8b8b;border-radius:6px;"></div>
<svg class="b" style="left:1849px;top:947px;" width="20" height="20" viewBox="0 0 20 20"><path d="M4 5.5 L16.5 5.5 L10 12.6 Z" fill="#8b8b8b"/></svg>
<div class="b" style="left:1776.5px;top:835px;width:51px;height:51px;background:#299cdb;border-radius:50%;box-shadow:0 2px 6px rgba(0,0,0,0.15);"></div>
<svg class="b" style="left:1791px;top:849px;" width="23" height="22" viewBox="0 0 23 22"><path d="M3.4 2.9 H20.6 V15.4 H7.2 L3.4 19.2 Z" fill="none" stroke="#fff" stroke-width="1.8" stroke-linejoin="miter"/><circle cx="7.9" cy="9.6" r="1.2" fill="#fff"/><circle cx="11.7" cy="9.6" r="1.2" fill="#fff"/><circle cx="15.6" cy="9.6" r="1.2" fill="#fff"/></svg>
<div class="b" style="left:1774px;top:894.3px;width:58.3px;height:58.3px;background:#3f86f4;border-radius:50%;box-shadow:0 2px 6px rgba(0,0,0,0.15);"></div>
<svg class="b" style="left:1786px;top:906px;" width="34" height="32" viewBox="0 0 34 32"><g transform="translate(-1786 -906)"><circle cx="1802.8" cy="910.2" r="1.9" fill="#fff"/><rect x="1802" y="911" width="1.6" height="5.5" fill="#fff"/><rect x="1793.3" y="916.9" width="19.6" height="16.9" rx="3" fill="none" stroke="#fff" stroke-width="2"/><rect x="1792.3" y="931.8" width="21.6" height="2.9" fill="#fff"/><rect x="1789.8" y="922.4" width="2.6" height="7.8" rx="0.6" fill="none" stroke="#fff" stroke-width="1.1"/><rect x="1813.8" y="922.4" width="2.6" height="7.8" rx="0.6" fill="none" stroke="#fff" stroke-width="1.1"/><circle cx="1799.2" cy="922.7" r="1.9" fill="#fff"/><circle cx="1806.6" cy="922.7" r="1.9" fill="#fff"/><path fill="#fff" fill-rule="evenodd" d="M1796.2 927.3 H1810 V933.5 H1796.2 Z M1797.4 928.5 V932.3 H1800.1 V928.5 Z M1801.4 928.5 V932.3 H1804.6 V928.5 Z M1805.9 928.5 V932.3 H1808.8 V928.5 Z"/></g></svg>
<div class="b" style="left:1552.2px;top:356.8px;width:271.9px;height:54.8px;border:5.1px solid #f2852f;border-radius:11px;box-sizing:border-box;"></div>
<svg class="b" style="left:1400px;top:400px;" width="160" height="150" viewBox="0 0 160 150"><g transform="translate(-1400 -400)"><path d="M1429.3 530.6 L1514.4 438.8 L1502.6 433.3 L1544.5 419.3 L1530.7 460.7 L1525.6 449.6 L1432.4 533.9 Q1430.7 535.3 1429.2 533.9 Q1427.8 532.2 1429.3 530.6 Z" fill="#f2852f"/></g></svg>
</body></html>
